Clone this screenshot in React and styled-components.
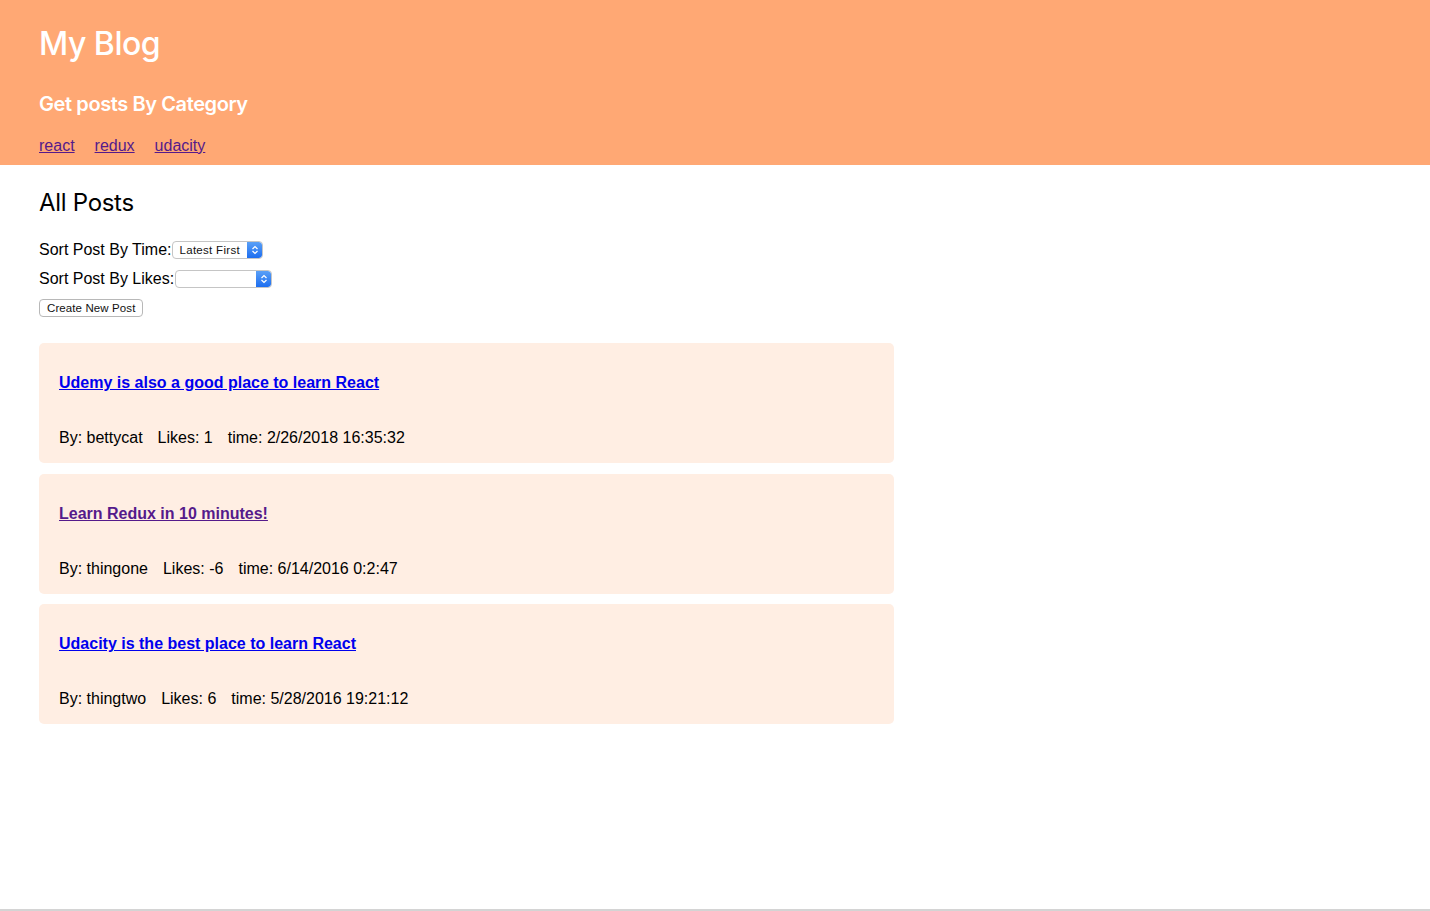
import React from 'react';
import styled, { createGlobalStyle } from 'styled-components';

const GlobalStyle = createGlobalStyle`
  html, body {
    margin: 0;
    padding: 0;
    background: #fff;
  }
  body {
    font-family: "Liberation Sans", Arial, sans-serif;
    color: #000;
  }
`;

const categories = ['react', 'redux', 'udacity'];

const posts = [
  {
    id: 1,
    title: 'Udemy is also a good place to learn React',
    author: 'bettycat',
    likes: 1,
    time: '2/26/2018 16:35:32',
    visited: false,
  },
  {
    id: 2,
    title: 'Learn Redux in 10 minutes!',
    author: 'thingone',
    likes: -6,
    time: '6/14/2016 0:2:47',
    visited: true,
  },
  {
    id: 3,
    title: 'Udacity is the best place to learn React',
    author: 'thingtwo',
    likes: 6,
    time: '5/28/2016 19:21:12',
    visited: false,
  },
];

const Arrows = () => (
  <svg width="8" height="10" viewBox="0 0 8 10">
    <path d="M1.5 4 L4 1.5 L6.5 4" fill="none" stroke="#fff" strokeWidth="1.2" />
    <path d="M1.5 6 L4 8.5 L6.5 6" fill="none" stroke="#fff" strokeWidth="1.2" />
  </svg>
);

const App = () => {
  return (
    <>
      <GlobalStyle />
      <Page>
        <Header>
          <Title>My Blog</Title>
          <SubTitle>Get posts By Category</SubTitle>
          <CategoryNav>
            {categories.map((c) => (
              <CategoryLink key={c} href="#">
                {c}
              </CategoryLink>
            ))}
          </CategoryNav>
        </Header>

        <Main>
          <SectionTitle>All Posts</SectionTitle>

          <SortRow>
            <label>Sort Post By Time:</label>
            <FakeSelect $width={91}>
              <span>Latest First</span>
              <ArrowBox>
                <Arrows />
              </ArrowBox>
            </FakeSelect>
          </SortRow>
          <SortRow>
            <label>Sort Post By Likes:</label>
            <FakeSelect $width={97}>
              <span />
              <ArrowBox>
                <Arrows />
              </ArrowBox>
            </FakeSelect>
          </SortRow>

          <CreateButton>Create New Post</CreateButton>

          <PostList>
            {posts.map((post) => (
              <PostCard key={post.id}>
                <PostTitle href="#" $visited={post.visited}>
                  {post.title}
                </PostTitle>
                <PostMeta>
                  <span>By: {post.author}</span>
                  <span>Likes: {post.likes}</span>
                  <span>time: {post.time}</span>
                </PostMeta>
              </PostCard>
            ))}
          </PostList>
        </Main>
      </Page>
    </>
  );
};

// styled components
const Page = styled.div`
  min-height: 100vh;
  box-sizing: border-box;
  border-bottom: 2px solid #d4d4d4;
`;

const Header = styled.header`
  background: #ffa874;
  padding: 24px 39px 9px;
  height: 165px;
  box-sizing: border-box;
`;

const Title = styled.h1`
  margin: 0;
  font-family: Inter, "Open Sans", sans-serif;
  font-weight: 500;
  font-size: 32px;
  line-height: 40px;
  letter-spacing: -0.5px;
  color: #fff;
`;

const SubTitle = styled.h3`
  margin: 28px 0 0;
  font-family: Inter, "Open Sans", sans-serif;
  font-weight: 600;
  font-size: 20px;
  line-height: 24px;
  letter-spacing: -0.4px;
  color: #fff;
`;

const CategoryNav = styled.nav`
  display: flex;
  gap: 20px;
  margin-top: 21px;
`;

const CategoryLink = styled.a`
  font-size: 16px;
  line-height: 18px;
  color: #551a8b;
`;

const Main = styled.main`
  padding: 0 39px;
  width: 855px;
`;

const SectionTitle = styled.h2`
  margin: 24px 0 0;
  font-family: Inter, "Open Sans", sans-serif;
  font-weight: 400;
  font-size: 24px;
  line-height: 28px;
  letter-spacing: -0.3px;
  margin-bottom: 18px;
`;

const SortRow = styled.div`
  display: flex;
  align-items: center;
  height: 29px;
  font-size: 16px;

  label {
    line-height: 18px;
  }
`;

const FakeSelect = styled.div`
  display: flex;
  align-items: stretch;
  width: ${(p) => p.$width}px;
  height: 18px;
  box-sizing: border-box;
  border: 1px solid #c5c5c5;
  border-radius: 4px;
  background: #fff;
  overflow: hidden;
  font-size: 11.5px;
  margin-left: 1px;

  span {
    flex: 1;
    padding-left: 6px;
    line-height: 16px;
    color: #111;
    letter-spacing: 0.3px;
  }
`;

const ArrowBox = styled.div`
  width: 15px;
  display: flex;
  align-items: center;
  justify-content: center;
  background: linear-gradient(#5aa0f7, #1d6ef0);
  border-radius: 0 3px 3px 0;
`;

const CreateButton = styled.button`
  display: block;
  margin-top: 6px;
  height: 18px;
  padding: 0 7px;
  font-family: "Liberation Sans", Arial, sans-serif;
  font-size: 11.5px;
  letter-spacing: 0.1px;
  line-height: 16px;
  color: #111;
  background: #fff;
  border: 1px solid #b8b8b8;
  border-radius: 4px;
`;

const PostList = styled.div`
  display: flex;
  flex-direction: column;
  gap: 10.5px;
  margin-top: 26px;
`;

const PostCard = styled.div`
  background: #ffeee3;
  border-radius: 5px;
  height: 120px;
  box-sizing: border-box;
  padding: 31px 20px 0;
`;

const PostTitle = styled.a`
  display: block;
  font-weight: 700;
  font-size: 16px;
  line-height: 18px;
  color: ${(p) => (p.$visited ? '#551a8b' : '#0000ee')};
`;

const PostMeta = styled.div`
  display: flex;
  gap: 15px;
  margin-top: 37px;
  font-size: 16px;
  line-height: 18px;
`;

export default App;
